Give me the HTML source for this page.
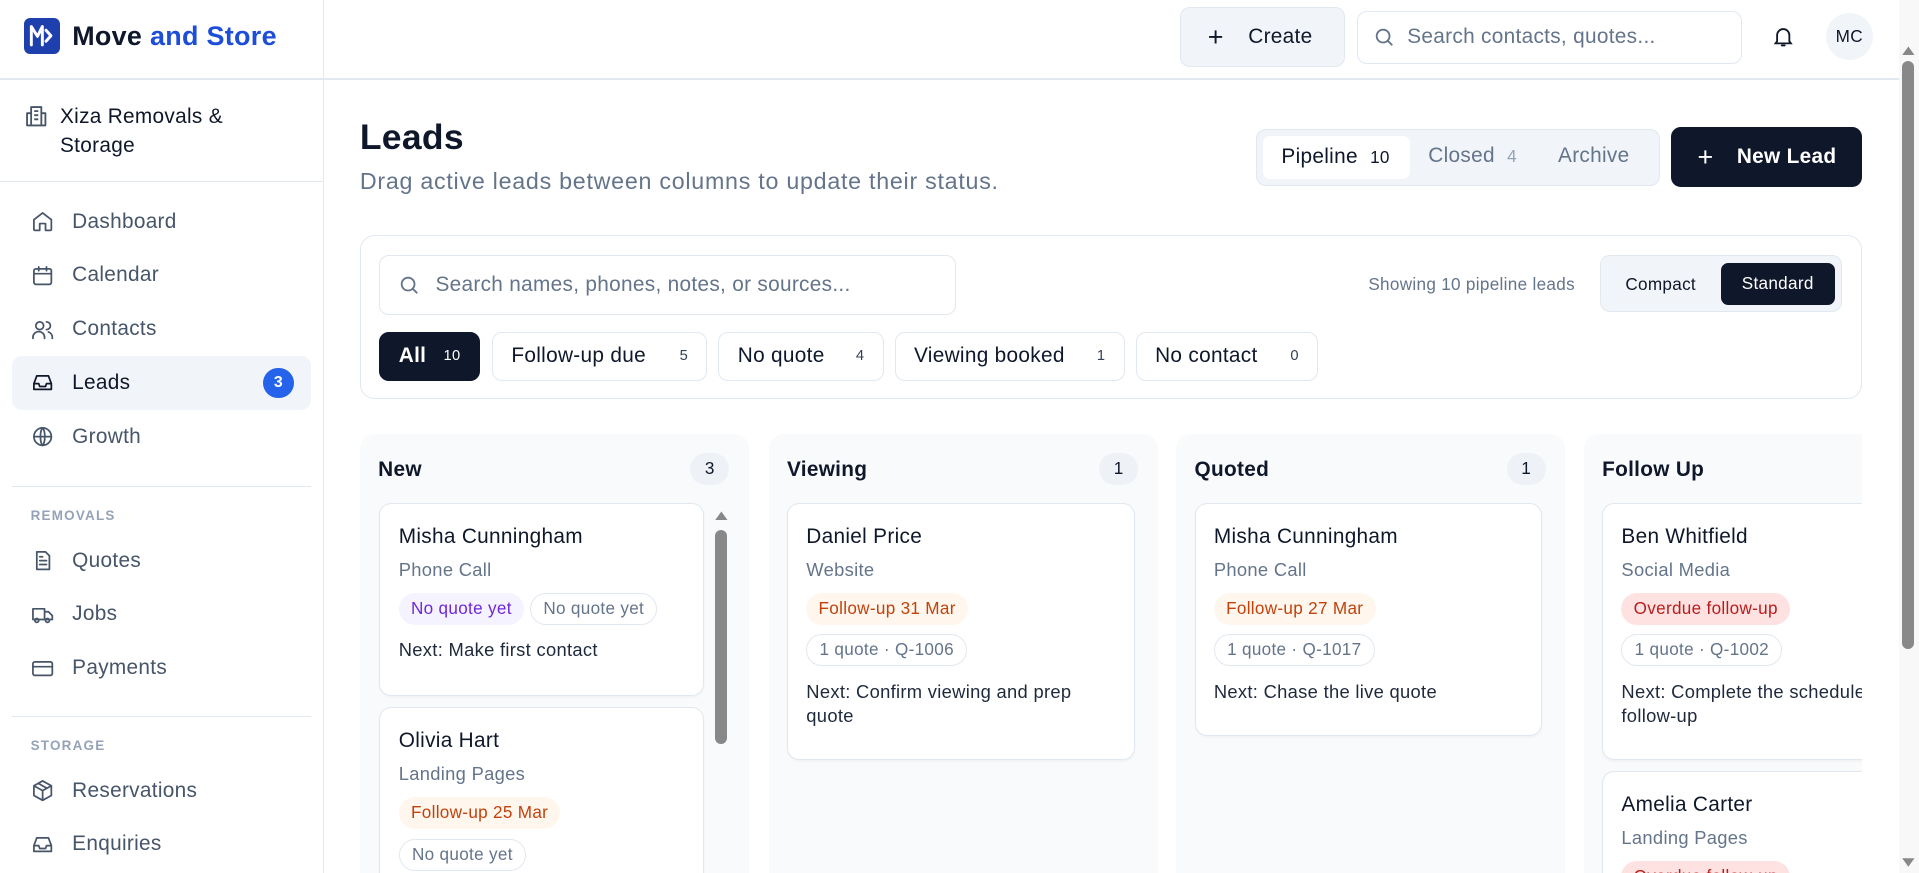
<!DOCTYPE html>
<html><head><meta charset="utf-8">
<style>
*{box-sizing:border-box;margin:0;padding:0}
html{zoom:1.2239;overflow:hidden;height:713px}
body{width:1568px;height:713px;overflow:hidden;font-family:"Liberation Sans",sans-serif;color:#0f172a;background:#fff;position:relative;letter-spacing:0.25px}
.abs{position:absolute}
.side{position:absolute;left:0;top:0;width:265px;height:713px;border-right:1px solid #e2e8f0}
.hline{position:absolute;height:1px;background:#e2e8f0}
.nav{position:absolute;left:10px;width:244px;height:44px;display:flex;align-items:center;padding-left:15px;font-size:17px;color:#475569}
.nav svg{width:19px;height:19px;margin-right:15px;fill:none;stroke:#475569;stroke-width:1.8;stroke-linecap:round;stroke-linejoin:round}
.nav.act{background:#f1f5f9;border-radius:8px;color:#0f172a}
.nav.act svg{stroke:#0f172a}
.sec{position:absolute;left:25px;font-size:11px;letter-spacing:1px;color:#94a3b8;font-weight:bold}
.btn{position:absolute;display:flex;align-items:center;border-radius:8px}
.chip{position:absolute;top:271px;height:40px;border:1px solid #e2e8f0;border-radius:8px;display:flex;align-items:center;padding:0 15px;font-size:17px;background:#fff}
.chip small{font-size:12px;margin-left:auto;color:#334155}
.col{position:absolute;top:355px;height:358px;background:#f8fafc;border-radius:12px 12px 0 0}
.colh{position:absolute;left:15px;top:19px;font-size:17px;font-weight:bold}
.cnt{position:absolute;top:15px;width:32px;height:26px;border-radius:13px;background:#eef2f7;font-size:14px;display:flex;align-items:center;justify-content:center}
.card{position:absolute;background:#fff;border:1px solid #e2e8f0;border-radius:10px;padding:17px 15px;box-shadow:0 1px 2px rgba(0,0,0,.04)}
.card .n{font-size:17px;margin-bottom:8px}
.card .s{font-size:15px;color:#64748b;margin-bottom:10px}
.pill{display:inline-block;height:26px;line-height:26px;padding:0 10px;border-radius:13px;font-size:14px;margin-right:5px;margin-bottom:8px}
.po{background:#fff7ed;color:#c2410c}
.pp{background:#f5f3ff;color:#6d28d9}
.pr{background:#fee2e2;color:#b91c1c}
.pg{border:1px solid #e2e8f0;color:#64748b;line-height:24px}
.card .x{font-size:15px;color:#1e293b;line-height:20px;margin-top:3px}
</style></head><body>
<div class="side">
  <div class="abs" style="left:20px;top:15px;width:29px;height:29px;background:#1e40af;border-radius:5px">
    <svg width="29" height="29" viewBox="0 0 29 29" fill="none" stroke="#fff" stroke-width="2.4" stroke-linecap="round" stroke-linejoin="round"><path d="M6 22V7l5 8 4-8v15"/><path d="M18 10l4 4.5-4 4.5"/></svg>
  </div>
  <div class="abs" style="left:59px;top:17px;font-size:22px;font-weight:bold">Move <span style="color:#1d4ed8">and Store</span></div>
  <div class="hline" style="left:0;top:64px;width:265px"></div>
  <svg class="abs" style="left:20px;top:85px" width="20" height="20" viewBox="0 0 24 24" fill="none" stroke="#475569" stroke-width="1.8" stroke-linejoin="round"><path d="M7 21V3h10v18M7 9H3v12h18V9h-4M10 7h4M10 11h4M10 15h4"/></svg>
  <div class="abs" style="left:49px;top:83px;font-size:17px;line-height:24px">Xiza Removals &amp;<br>Storage</div>
  <div class="hline" style="left:0;top:148px;width:265px"></div>
  <div class="nav" style="top:159px"><svg viewBox="0 0 24 24"><path d="M3 10l9-7 9 7v10a1 1 0 01-1 1h-5v-7h-6v7H4a1 1 0 01-1-1z"/></svg>Dashboard</div>
  <div class="nav" style="top:203px"><svg viewBox="0 0 24 24"><rect x="3" y="5" width="18" height="16" rx="2"/><path d="M3 10h18M8 3v4M16 3v4"/></svg>Calendar</div>
  <div class="nav" style="top:247px"><svg viewBox="0 0 24 24"><circle cx="9" cy="8" r="4"/><path d="M2 21v-1a6 6 0 0112 0v1M16 4a4 4 0 010 8M22 21v-1a6 6 0 00-4-5.6"/></svg>Contacts</div>
  <div class="nav act" style="top:291px"><svg viewBox="0 0 24 24"><path d="M3 13l3-8h12l3 8v6H3zM3 13h5l1 3h6l1-3h5"/></svg>Leads<span style="margin-left:auto;margin-right:14px;width:25px;height:25px;border-radius:50%;background:#2563eb;color:#fff;font-size:13px;font-weight:bold;display:flex;align-items:center;justify-content:center">3</span></div>
  <div class="nav" style="top:335px"><svg viewBox="0 0 24 24"><circle cx="12" cy="12" r="9"/><path d="M3 12h18M12 3c3 3 3 15 0 18M12 3c-3 3-3 15 0 18"/></svg>Growth</div>
  <div class="hline" style="left:10px;top:397px;width:244px"></div>
  <div class="sec" style="top:415px">REMOVALS</div>
  <div class="nav" style="top:436px"><svg viewBox="0 0 24 24"><path d="M6 3h9l4 4v14H6zM9 12h7M9 16h7M9 8h3"/></svg>Quotes</div>
  <div class="nav" style="top:480px"><svg viewBox="0 0 24 24"><path d="M2 6h12v11H2zM14 9h4l4 4v4h-8"/><circle cx="6" cy="18" r="2"/><circle cx="17" cy="18" r="2"/></svg>Jobs</div>
  <div class="nav" style="top:524px"><svg viewBox="0 0 24 24"><rect x="2" y="5" width="20" height="14" rx="2"/><path d="M2 10h20"/></svg>Payments</div>
  <div class="hline" style="left:10px;top:585px;width:244px"></div>
  <div class="sec" style="top:603px">STORAGE</div>
  <div class="nav" style="top:624px"><svg viewBox="0 0 24 24"><path d="M12 2l9 5v10l-9 5-9-5V7zM3 7l9 5 9-5M12 12v10M7.5 4.5l9 5"/></svg>Reservations</div>
  <div class="nav" style="top:668px"><svg viewBox="0 0 24 24"><path d="M3 13l3-8h12l3 8v6H3zM3 13h5l1 3h6l1-3h5"/></svg>Enquiries</div>
</div>

<div class="hline" style="left:265px;top:64px;width:1287px"></div>
<div class="btn" style="left:964px;top:6px;width:135px;height:49px;background:#f1f5f9;border:1px solid #e2e8f0;font-size:17px;padding-left:22px"><span style="font-size:22px;margin-right:20px;font-weight:300">+</span>Create</div>
<div class="btn" style="left:1109px;top:9px;width:314px;height:43px;border:1px solid #e2e8f0;font-size:17px;color:#64748b;padding-left:12px">
<svg width="18" height="18" viewBox="0 0 24 24" fill="none" stroke="#64748b" stroke-width="2"><circle cx="11" cy="11" r="7"/><path d="M16 16l5 5"/></svg><span style="margin-left:10px">Search contacts, quotes...</span></div>
<svg class="abs" style="left:1447px;top:20px" width="20" height="20" viewBox="0 0 24 24" fill="none" stroke="#0f172a" stroke-width="1.8" stroke-linecap="round"><path d="M6 17V11a6 6 0 0112 0v6l1.5 2h-15zM10.5 21h3"/></svg>
<div class="abs" style="left:1492px;top:11px;width:38px;height:38px;border-radius:50%;background:#f1f5f9;font-size:14px;display:flex;align-items:center;justify-content:center">MC</div>

<div class="abs" style="left:294px;top:96px;font-size:29px;font-weight:bold">Leads</div>
<div class="abs" style="left:294px;top:137px;font-size:19px;color:#64748b;letter-spacing:0.6px">Drag active leads between columns to update their status.</div>
<div class="abs" style="left:1026px;top:105px;width:330px;height:47px;background:#f1f5f9;border:1px solid #e2e8f0;border-radius:8px"></div>
<div class="btn" style="left:1032px;top:111px;width:120px;height:35px;background:#fff;font-size:17px;padding-left:15px;border-radius:6px">Pipeline<span style="font-size:14px;margin-left:10px">10</span></div>
<div class="abs" style="left:1167px;top:118px;font-size:17px;color:#64748b">Closed<span style="font-size:14px;margin-left:10px;color:#94a3b8">4</span></div>
<div class="abs" style="left:1273px;top:118px;font-size:17px;color:#64748b">Archive</div>
<div class="btn" style="left:1365px;top:104px;width:156px;height:49px;background:#0f172a;color:#fff;font-size:17px;font-weight:bold;padding-left:22px"><span style="font-size:22px;font-weight:300;margin-right:19px">+</span>New Lead</div>

<div class="abs" style="left:294px;top:192px;width:1227px;height:134px;border:1px solid #e2e8f0;border-radius:12px"></div>
<div class="btn" style="left:310px;top:208px;width:471px;height:49px;border:1px solid #e2e8f0;font-size:17px;color:#64748b;padding-left:14px">
<svg width="18" height="18" viewBox="0 0 24 24" fill="none" stroke="#64748b" stroke-width="2"><circle cx="11" cy="11" r="7"/><path d="M16 16l5 5"/></svg><span style="margin-left:13px">Search names, phones, notes, or sources...</span></div>
<div class="abs" style="left:1118px;top:224px;font-size:14px;color:#64748b">Showing 10 pipeline leads</div>
<div class="abs" style="left:1307px;top:208px;width:198px;height:47px;background:#f1f5f9;border:1px solid #e2e8f0;border-radius:8px"></div>
<div class="abs" style="left:1328px;top:224px;font-size:14px">Compact</div>
<div class="btn" style="left:1406px;top:215px;width:93px;height:34px;background:#0f172a;color:#fff;font-size:14px;justify-content:center;border-radius:6px">Standard</div>

<div class="chip" style="left:310px;width:82px;background:#0f172a;color:#fff;border-color:#0f172a;font-weight:bold">All<small style="color:#fff;font-weight:normal">10</small></div>
<div class="chip" style="left:402px;width:176px">Follow-up due<small>5</small></div>
<div class="chip" style="left:587px;width:135px">No quote<small>4</small></div>
<div class="chip" style="left:731px;width:188px">Viewing booked<small>1</small></div>
<div class="chip" style="left:928px;width:149px">No contact<small>0</small></div>

<div class="abs" style="left:0;top:0;width:1552px;height:713px;overflow:hidden">
<div class="col" style="left:294px;width:318px"><div class="colh">New</div><div class="cnt" style="left:270px">3</div>
 <svg class="abs" style="left:289px;top:61px" width="12" height="10"><path d="M1 9L6 2l5 7z" fill="#888"/></svg>
 <div class="abs" style="left:290px;top:78px;width:10px;height:175px;background:#888;border-radius:5px"></div>
</div>
<div class="card" style="left:310px;top:411px;width:265px;height:158px"><div class="n">Misha Cunningham</div><div class="s">Phone Call</div><span class="pill pp">No quote yet</span><span class="pill pg">No quote yet</span><div class="x">Next: Make first contact</div></div>
<div class="card" style="left:310px;top:578px;width:265px;height:135px;border-bottom:none;border-radius:10px 10px 0 0"><div class="n">Olivia Hart</div><div class="s">Landing Pages</div><span class="pill po">Follow-up 25 Mar</span><br><span class="pill pg">No quote yet</span></div>

<div class="col" style="left:628px;width:318px"><div class="colh">Viewing</div><div class="cnt" style="left:270px">1</div></div>
<div class="card" style="left:643px;top:411px;width:284px;height:210px"><div class="n">Daniel Price</div><div class="s">Website</div><span class="pill po">Follow-up 31 Mar</span><br><span class="pill pg">1 quote · Q-1006</span><div class="x">Next: Confirm viewing and prep<br>quote</div></div>

<div class="col" style="left:961px;width:318px"><div class="colh">Quoted</div><div class="cnt" style="left:270px">1</div></div>
<div class="card" style="left:976px;top:411px;width:284px;height:190px"><div class="n">Misha Cunningham</div><div class="s">Phone Call</div><span class="pill po">Follow-up 27 Mar</span><br><span class="pill pg">1 quote · Q-1017</span><div class="x">Next: Chase the live quote</div></div>

<div class="abs" style="left:1294px;top:355px;width:227px;height:358px;overflow:hidden">
 <div class="col" style="left:0;top:0;width:318px"><div class="colh">Follow Up</div></div>
 <div class="card" style="left:15px;top:56px;width:284px;height:210px;white-space:nowrap"><div class="n">Ben Whitfield</div><div class="s">Social Media</div><span class="pill pr">Overdue follow-up</span><br><span class="pill pg">1 quote · Q-1002</span><div class="x">Next: Complete the scheduled<br>follow-up</div></div>
 <div class="card" style="left:15px;top:275px;width:284px;height:83px;border-bottom:none;border-radius:10px 10px 0 0;overflow:hidden"><div class="n">Amelia Carter</div><div class="s">Landing Pages</div><span class="pill pr">Overdue follow-up</span></div>
</div>
</div>

<div class="abs" style="left:1552px;top:0;width:16px;height:713px;background:#f8f8f8"></div>
<svg class="abs" style="left:1553px;top:36px" width="12" height="10"><path d="M1 9L6 2l5 7z" fill="#888"/></svg>
<div class="abs" style="left:1554px;top:50px;width:10px;height:480px;background:#888;border-radius:5px"></div>
<svg class="abs" style="left:1553px;top:700px" width="12" height="10"><path d="M1 1L6 8l5-7z" fill="#888"/></svg>
</body></html>
